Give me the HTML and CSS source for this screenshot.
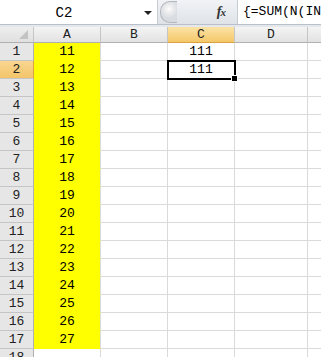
FILE: index.html
```html
<!DOCTYPE html>
<html>
<head>
<meta charset="utf-8">
<link rel="stylesheet" href="styles.css">
</head>
<body>
<div class="app">
  <div class="fbar">
    <div class="namebox">
      <span class="ref">C2</span>
      <span class="arrow"></span>
    </div>
    <div class="fmid">
      <span class="knob"></span>
      <span class="fx"><i>f</i><i class="x">x</i></span>
    </div>
    <div class="finput">{=SUM(N(IN</div>
  </div>
  <div class="gap"></div>
  <div class="grid" id="grid">
    <div class="ch corner"><span class="tri"></span></div>
    <div class="ch">A</div>
    <div class="ch">B</div>
    <div class="ch sel">C</div>
    <div class="ch">D</div>
    <div class="ch last"></div>
  </div>
</div>
<script src="app.js"></script>
</body>
</html>
```
FILE: app.js
```js
(function(){
  var g = document.getElementById('grid');
  var html = '';
  for (var r = 1; r <= 18; r++) {
    html += '<div class="rh' + (r === 2 ? ' sel' : '') + '">' + r + '</div>';
    if (r <= 17) {
      html += '<div class="c ya">' + (10 + r) + '</div>';
    } else {
      html += '<div class="c"></div>';
    }
    html += '<div class="c"></div>';
    var cv = (r === 1 || r === 2) ? '111' : '';
    html += '<div class="c' + (r === 2 ? ' active' : '') + '">' + cv + (r === 2 ? '<span class="handle"></span>' : '') + '</div>';
    html += '<div class="c"></div>';
    html += '<div class="c last"></div>';
  }
  g.insertAdjacentHTML('beforeend', html);
})();
```
FILE: styles.css
```css
html, body {
  margin: 0;
  padding: 0;
  background: #ffffff;
  overflow: hidden;
}
.app {
  width: 321px;
  height: 357px;
  overflow: hidden;
  font-family: "Liberation Mono", "DejaVu Sans Mono", monospace;
}
.fbar {
  display: flex;
  height: 25px;
  box-sizing: border-box;
  border-bottom: 1px solid #b9c0c9;
  background: #e9edf1;
}
.namebox {
  width: 158px;
  box-sizing: border-box;
  background: #ffffff;
  border-right: 1px solid #c7ccd3;
  display: flex;
  align-items: center;
  position: relative;
}
.ref {
  flex: 1;
  text-align: center;
  font-size: 14px;
  color: #000;
  padding-right: 16px;
  padding-top: 1px;
}
.arrow {
  width: 0;
  height: 0;
  border-left: 4px solid transparent;
  border-right: 4px solid transparent;
  border-top: 4px solid #222;
  margin-right: 5px;
  margin-top: 2px;
}
.fmid {
  width: 79px;
  display: flex;
  align-items: center;
  background: linear-gradient(#f1f3f6, #dfe3e8);
}
.knob {
  width: 16px;
  height: 20px;
  margin-left: 2px;
  border-radius: 10px 0 0 10px;
  border: 1px solid #b3b8bf;
  border-right: none;
  background: radial-gradient(circle at 8px 7px, #ffffff 0, #f0f0f0 3px, #d9dde2 9px);
}
.fx {
  margin-left: auto;
  margin-right: 12px;
  font-family: "Liberation Serif", serif;
  font-style: italic;
  font-weight: bold;
  font-size: 14px;
  color: #333;
  letter-spacing: -1px;
}
.fx .x {
  font-size: 11px;
}
.finput {
  flex: 1;
  background: #ffffff;
  border-left: 1px solid #c7ccd3;
  font-size: 13px;
  line-height: 24px;
  padding-left: 5px;
  white-space: nowrap;
  overflow: hidden;
  color: #000;
}
.gap {
  height: 2px;
  background: #e4e8ed;
}
.grid {
  display: grid;
  grid-template-columns: 34px 67px 67px 67px 73px 1fr;
  grid-template-rows: 16px;
  grid-auto-rows: 18px;
}
.ch {
  box-sizing: border-box;
  border-right: 1px solid #c5c5c5;
  border-bottom: 1px solid #b0b0b0;
  background: linear-gradient(#f4f4f4, #e2e2e2);
  font-size: 13px;
  line-height: 15px;
  text-align: center;
  color: #222;
}
.ch.sel {
  background: linear-gradient(#fbe3a6, #f5c869);
  border-bottom-color: #d9a440;
}
.corner {
  position: relative;
  background: linear-gradient(#eeeeee, #e0e0e0);
}
.tri {
  position: absolute;
  right: 5px;
  bottom: 3px;
  width: 0;
  height: 0;
  border-left: 9px solid transparent;
  border-bottom: 9px solid #c3c3c3;
}
.rh {
  box-sizing: border-box;
  border-right: 1px solid #b0b0b0;
  border-bottom: 1px solid #c5c5c5;
  background: #e6e6e6;
  font-size: 13px;
  line-height: 18px;
  text-align: center;
  color: #222;
}
.rh.sel {
  background: linear-gradient(#f9d690, #f3c46a);
  border-right-color: #d9a440;
}
.c {
  box-sizing: border-box;
  border-right: 1px solid #dadada;
  border-bottom: 1px solid #dadada;
  font-size: 13px;
  line-height: 18px;
  text-align: center;
  color: #000;
  position: relative;
}
.c.ya {
  background: #ffff00;
  border-bottom-color: #ffff00;
  border-right-color: #dadada;
}
.c.last, .ch.last {
  border-right: none;
}
.c.active {
  outline: 2px solid #000;
  outline-offset: -1px;
  z-index: 2;
}
.handle {
  position: absolute;
  right: -4px;
  bottom: -4px;
  width: 5px;
  height: 5px;
  background: #000;
  border: 1px solid #fff;
}
```
